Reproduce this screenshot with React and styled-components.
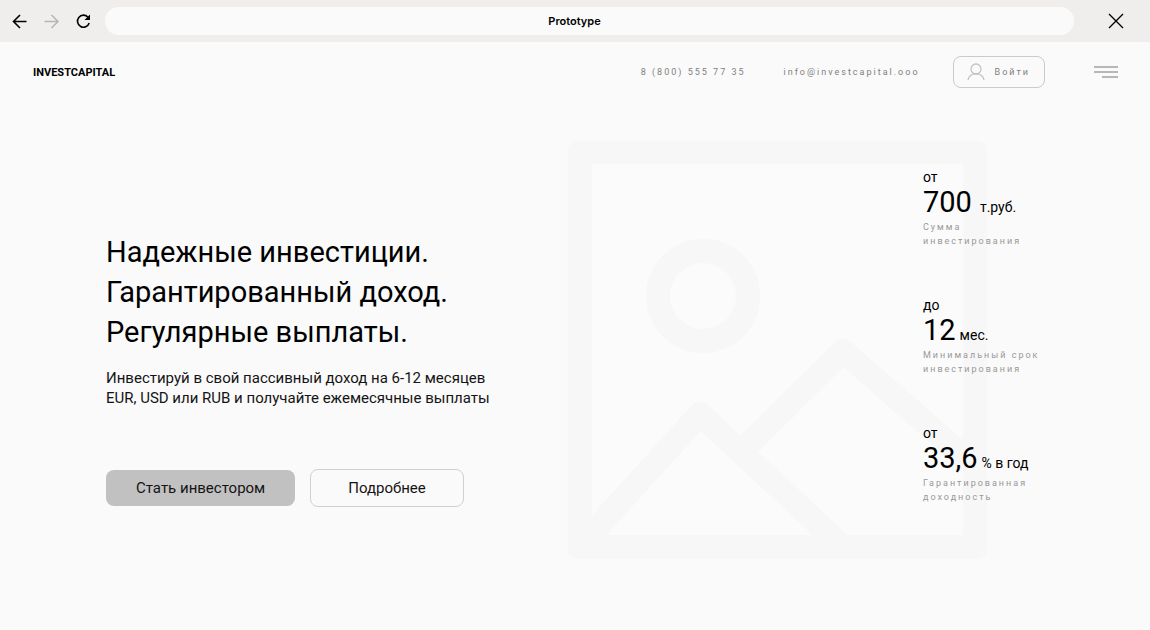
import React from 'react'
import styled, { createGlobalStyle } from 'styled-components'

const stats = [
  {
    prefix: 'от',
    value: '700',
    unit: 'т.руб.',
    wide: true,
    caption: ['Сумма', 'инвестирования']
  },
  {
    prefix: 'до',
    value: '12',
    unit: 'мес.',
    caption: ['Минимальный срок', 'инвестирования']
  },
  {
    prefix: 'от',
    value: '33,6',
    unit: '% в год',
    caption: ['Гарантированная', 'доходность']
  }
]

const BrowserBar = () => (
  <Bar>
    <BarButton aria-label='Назад'>
      <svg width='16' height='16' viewBox='0 0 16 16'>
        <path d='M14.5 8.5H1.5M8 2L1.5 8.5L8 15' />
      </svg>
    </BarButton>
    <BarButton aria-label='Вперед' disabled>
      <svg width='16' height='16' viewBox='0 0 16 16'>
        <path d='M0.5 8.5H14M7.5 2L14 8.5L7.5 15' />
      </svg>
    </BarButton>
    <BarButton aria-label='Обновить'>
      <svg width='16' height='16' viewBox='0 0 16 16'>
        <path d='M12 4.2A6 6 0 1 0 13.2 10' />
        <path className='fill' d='M14 1.5V7H8.5Z' />
      </svg>
    </BarButton>
    <Address>Prototype</Address>
    <CloseButton aria-label='Закрыть'>
      <svg width='16' height='16' viewBox='0 0 16 16'>
        <path d='M1 1L15 15M15 1L1 15' />
      </svg>
    </CloseButton>
  </Bar>
)

const SiteHeader = () => (
  <Header>
    <Logo href='#'>INVESTCAPITAL</Logo>
    <Contacts>
      <Contact href='tel:88005557735'>8 (800) 555 77 35</Contact>
      <Contact href='mailto:info@investcapital.ooo'>
        info@investcapital.ooo
      </Contact>
    </Contacts>
    <LoginButton>
      <svg width='18' height='18' viewBox='0 0 18 18'>
        <circle cx='9' cy='6' r='5' />
        <path d='M1 17C1.6 13 4.6 10.8 9 10.8S16.4 13 17 17' />
      </svg>
      Войти
    </LoginButton>
    <MenuButton aria-label='Меню'>
      <svg width='24' height='12' viewBox='0 0 24 12'>
        <path d='M0 1H24M0 6H24M8 11H24' />
      </svg>
    </MenuButton>
  </Header>
)

const Placeholder = () => (
  <Picture viewBox='0 0 419 418' aria-hidden='true'>
    <rect className='frame' x='1' y='1' width='417' height='416' rx='8' />
    <rect className='sheet' x='24' y='23' width='371' height='371' />
    <circle cx='135' cy='155' r='45' />
    <path d='M15 402L132 273L275 406' />
    <path d='M180 304L275 210L400 319' />
    <rect className='foot' x='12' y='394' width='395' height='16' />
  </Picture>
)

const App = () => {
  return (
    <>
      <GlobalStyle />
      <BrowserBar />
      <SiteHeader />
      <Hero>
        <Intro>
          <Title>
            Надежные инвестиции.
            <br />
            Гарантированный доход.
            <br />
            Регулярные выплаты.
          </Title>
          <Lead>
            Инвестируй в свой пассивный доход на 6-12 месяцев
            <br />
            EUR, USD или RUB и получайте ежемесячные выплаты
          </Lead>
          <Actions>
            <Button $primary>Стать инвестором</Button>
            <Button>Подробнее</Button>
          </Actions>
        </Intro>
        <Visual>
          <Placeholder />
          <Stats>
            {stats.map((stat) => (
              <Stat key={stat.value}>
                <p className='prefix'>{stat.prefix}</p>
                <Value $wide={stat.wide}>
                  {stat.value}
                  <span>{stat.unit}</span>
                </Value>
                <p className='caption'>
                  {stat.caption[0]}
                  <br />
                  {stat.caption[1]}
                </p>
              </Stat>
            ))}
          </Stats>
        </Visual>
      </Hero>
    </>
  )
}

export default App

const GlobalStyle = createGlobalStyle`
  * {
    box-sizing: border-box;
  }

  body {
    margin: 0;
    background: #fafafa;
    color: #000;
    font-family: Roboto, 'Liberation Sans', sans-serif;
  }

  h1, p {
    margin: 0;
    font-weight: 400;
  }

  button {
    padding: 0;
    border: 0;
    background: none;
    color: inherit;
    font-family: inherit;
    cursor: pointer;
  }

  svg {
    display: block;
    fill: none;
    stroke: currentColor;
  }
`

const Bar = styled.div`
  display: flex;
  align-items: center;
  gap: 16px;
  padding: 7px 26px 7px 12px;
  background: #efeeed;
`

const BarButton = styled.button`
  svg {
    stroke-width: 1.6;
  }

  .fill {
    fill: currentColor;
    stroke: none;
  }

  &:disabled {
    color: #b8b7b6;
  }
`

const Address = styled.div`
  flex: 1;
  margin: 0 18px 0 -3px;
  padding-right: 30px;
  border-radius: 14px;
  background: #fafafa;
  font-family: Inter, sans-serif;
  font-size: 11px;
  font-weight: 600;
  line-height: 28px;
  text-align: center;
`

const CloseButton = styled(BarButton)`
  svg {
    stroke-width: 1.4;
  }
`

const Header = styled.header`
  display: flex;
  align-items: center;
  padding: 14px 32px 14px 33px;
`

const Logo = styled.a`
  margin-right: auto;
  color: #000;
  font-size: 11px;
  font-weight: 700;
  text-decoration: none;
`

const Contacts = styled.address`
  display: flex;
  gap: 38px;
  margin-right: 33px;
  font-style: normal;
`

const Contact = styled.a`
  color: #808080;
  font-size: 9px;
  letter-spacing: 2px;
  text-decoration: none;
`

const LoginButton = styled.button`
  display: flex;
  align-items: center;
  gap: 10px;
  height: 32px;
  margin-right: 49px;
  padding: 0 14px 0 13px;
  border: 1px solid #cacaca;
  border-radius: 8px;
  color: #808080;
  font-size: 9px;
  letter-spacing: 2px;

  svg {
    color: #c4c4c4;
    stroke-width: 1.3;
  }
`

const MenuButton = styled.button`
  color: #a0a2a1;

  svg {
    stroke-width: 1.5;
  }
`

const Hero = styled.main`
  display: grid;
  grid-template-columns: minmax(0, 1fr) 471px;
  padding: 39px 111px 70px 106px;
`

const Intro = styled.section`
  padding-top: 91px;
`

const Title = styled.h1`
  font-size: 29px;
  line-height: 40px;
`

const Lead = styled.p`
  margin-top: 16px;
  color: #141414;
  font-size: 15px;
  line-height: 20px;
`

const Actions = styled.div`
  display: flex;
  align-items: center;
  gap: 15px;
  margin-top: 61px;
`

const Button = styled.button`
  height: ${({ $primary }) => ($primary ? '36px' : '38px')};
  padding: ${({ $primary }) => ($primary ? '0 30px' : '0 37px')};
  border: ${({ $primary }) => ($primary ? '0' : '1px solid #d0d0d0')};
  border-radius: 8px;
  background: ${({ $primary }) => ($primary ? '#c1c1c1' : 'transparent')};
  color: #141414;
  font-size: 15px;
`

// the stats share one grid cell with the picture and run over its right edge
const Visual = styled.section`
  display: grid;
  align-items: start;

  > * {
    grid-area: 1 / 1;
  }
`

const Picture = styled.svg`
  width: 419px;
  color: #f7f7f7;
  stroke-width: 24;
  stroke-linejoin: round;

  .frame {
    fill: currentColor;
    stroke-width: 2;
  }

  .sheet {
    fill: #fbfbfb;
    stroke: none;
  }

  .foot {
    fill: currentColor;
    stroke: none;
  }
`

const Stats = styled.div`
  display: flex;
  flex-direction: column;
  gap: 48px;
  padding: 27px 0 0 355px;
`

const Stat = styled.div`
  white-space: nowrap;

  .prefix {
    font-size: 14px;
    line-height: 18px;
  }

  .caption {
    margin-top: 2px;
    color: #989898;
    font-size: 9px;
    letter-spacing: 2px;
    line-height: 14px;
  }
`

const Value = styled.p`
  display: flex;
  align-items: baseline;
  gap: ${({ $wide }) => ($wide ? '8px' : '4px')};
  font-size: 29px;
  line-height: 32px;

  span {
    font-size: 14px;
    line-height: 16px;
  }
`
